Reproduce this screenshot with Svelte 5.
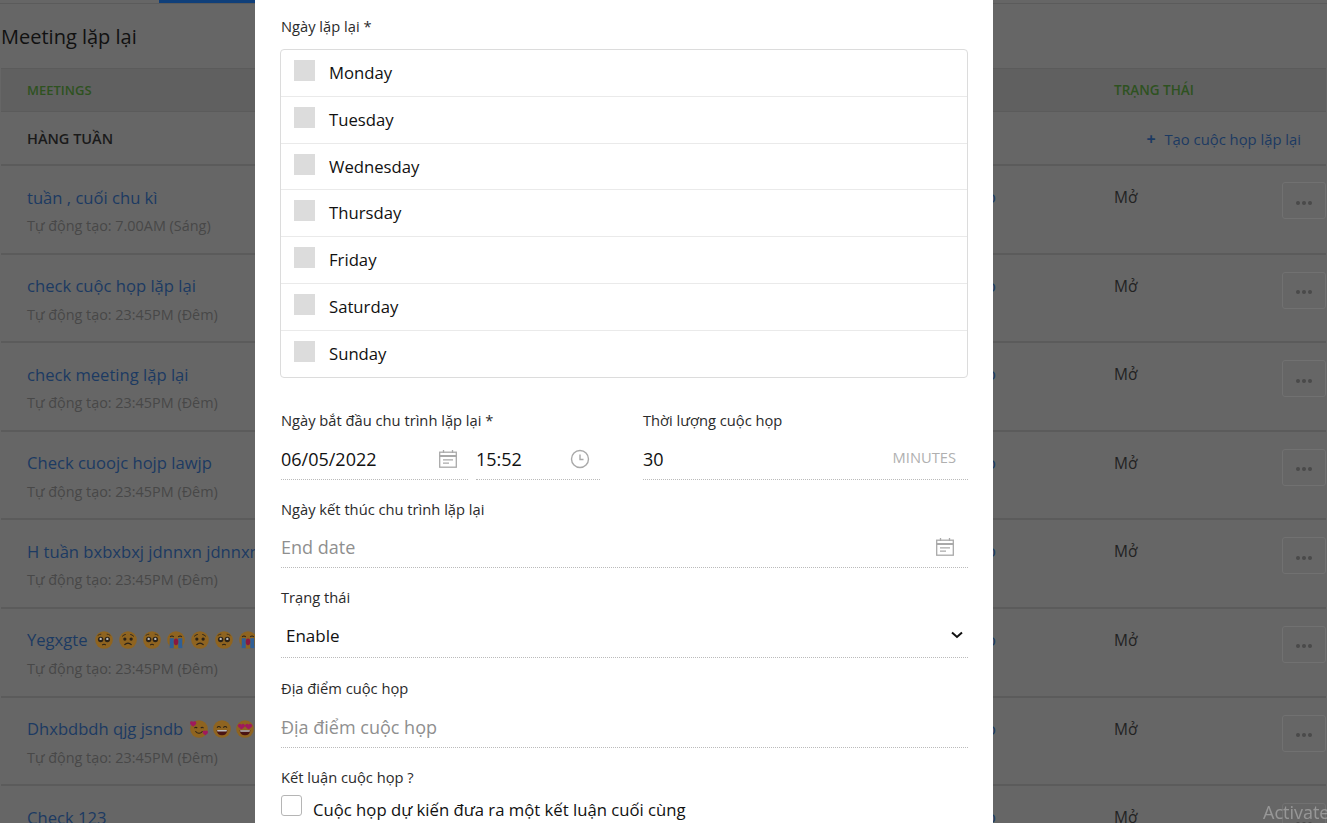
<script>
  const days = ["Monday", "Tuesday", "Wednesday", "Thursday", "Friday", "Saturday", "Sunday"];

  const meetings = [
    { title: "tuần , cuối chu kì", sub: "Tự động tạo: 7.00AM (Sáng)" },
    { title: "check cuộc họp lặp lại", sub: "Tự động tạo: 23:45PM (Đêm)" },
    { title: "check meeting lặp lại", sub: "Tự động tạo: 23:45PM (Đêm)" },
    { title: "Check cuoojc hojp lawjp", sub: "Tự động tạo: 23:45PM (Đêm)" },
    { title: "H tuần bxbxbxj jdnnxn jdnnxn jdnnxn", sub: "Tự động tạo: 23:45PM (Đêm)" },
    { title: "Yegxgte", sub: "Tự động tạo: 23:45PM (Đêm)", emoji: ["plead", "sad", "plead", "cry", "sad", "plead", "cry"] },
    { title: "Dhxbdbdh qjg jsndb", sub: "Tự động tạo: 23:45PM (Đêm)", emoji: ["hearts", "grin", "love"] },
    { title: "Check 123", sub: "Tự động tạo: 23:45PM (Đêm)" }
  ];
</script>

{#snippet face(kind)}
  <svg class="emoji" viewBox="0 0 20 20">
    <circle cx="10" cy="10" r="9.800" fill="#8f6420" />
    {#if kind === "plead"}
      <circle cx="6.300" cy="9.500" r="3" fill="#2a2218" />
      <circle cx="13.700" cy="9.500" r="3" fill="#2a2218" />
      <circle cx="6.300" cy="8.800" r="1.300" fill="#bbb" />
      <circle cx="13.700" cy="8.800" r="1.300" fill="#bbb" />
      <path d="M3 5q2-1.500 4-1.500M17 5q-2-1.500-4-1.500" fill="none" stroke="#3a2c18" stroke-width="1" />
      <path d="M8 15.500q2-1.400 4 0" fill="none" stroke="#2a2218" stroke-width="1.200" />
    {:else if kind === "sad"}
      <circle cx="6.500" cy="9" r="1.800" fill="#2a2218" />
      <circle cx="13.500" cy="9" r="1.800" fill="#2a2218" />
      <path d="M3.500 6q2-2 4-2.200M16.500 6q-2-2-4-2.200" fill="none" stroke="#2a2218" stroke-width="1" />
      <path d="M6 15.500q4-4 8 0" fill="none" stroke="#2a2218" stroke-width="1.300" />
    {:else if kind === "cry"}
      <rect x="3" y="8" width="4.500" height="11" fill="#2f5f96" />
      <rect x="12.500" y="8" width="4.500" height="11" fill="#2f5f96" />
      <path d="M3.500 6.500q2-2 4 0M12.500 6.500q2-2 4 0" fill="none" stroke="#2a2218" stroke-width="1.200" />
      <ellipse cx="10" cy="12" rx="2.500" ry="3.800" fill="#8a1840" />
    {:else if kind === "hearts"}
      <path d="M5 9q1.500-2 3 0M12 9q1.500-2 3 0" fill="none" stroke="#2a2218" stroke-width="1.200" />
      <path d="M6 12.500q4 4.500 8 0" fill="none" stroke="#2a2218" stroke-width="1.200" />
      <path d="M0 3.500a2 2 0 0 1 3.500-1.500a2 2 0 0 1 3.500 1.500q0 1.500-3.500 4q-3.500-2.500-3.500-4z" fill="#a01a5c" />
      <path d="M14 13.500a1.800 1.800 0 0 1 3-1.300a1.800 1.800 0 0 1 3 1.300q0 1.500-3 3.500q-3-2-3-3.500z" fill="#a01a5c" />
    {:else if kind === "grin"}
      <path d="M4.500 8.500q2-2.500 4 0M11.500 8.500q2-2.500 4 0" fill="none" stroke="#2a2218" stroke-width="1.300" />
      <path d="M4 11h12q-.5 6-6 6t-6-6z" fill="#4a1414" />
      <path d="M4.500 11h11l-.4 1.800h-10.200z" fill="#bbb" />
    {:else}
      <path d="M2 6.500a2.200 2.200 0 0 1 4-1.300a2.200 2.200 0 0 1 4 1.300q0 1.500-4 4q-4-2.500-4-4z" fill="#a01a5c" />
      <path d="M10 6.500a2.200 2.200 0 0 1 4-1.300a2.200 2.200 0 0 1 4 1.300q0 1.500-4 4q-4-2.500-4-4z" fill="#a01a5c" />
      <path d="M4 11.500h12q-.5 5.500-6 5.500t-6-5.500z" fill="#4a1414" />
      <path d="M4.500 11.500h11l-.4 1.500h-10.200z" fill="#bbb" />
    {/if}
  </svg>
{/snippet}

{#snippet calendar()}
  <svg class="field-icon" viewBox="0 0 20 20" fill="none" stroke="#a9a9a9" stroke-width="1.300">
    <rect x="1.700" y="3.200" width="16.600" height="15" />
    <path d="M1.700 7h16.600" stroke-width="2" />
    <path d="M5.500 1v3M14.500 1v3" />
    <path d="M5 10.800h10M5 14.200h6" />
  </svg>
{/snippet}

<div class="page">
  <div class="topbar"><span class="active-tab"></span></div>
  <h1>Meeting lặp lại</h1>

  <section class="table">
    <div class="row head">
      <span>MEETINGS</span>
      <span class="head-status">TRẠNG THÁI</span>
    </div>
    <div class="row group">
      <span>HÀNG TUẦN</span>
      <a class="create" href="#top"><b>+</b> Tạo cuộc họp lặp lại</a>
    </div>
    {#each meetings as m, i}
      <div class="row meeting">
        <div class="info">
          <div class="title">
            {m.title}
            {#if m.emoji}
              <span class="emojis" class:tight={m.emoji.length === 3}>
                {#each m.emoji as e}{@render face(e)}{/each}
              </span>
            {/if}
          </div>
          <div class="sub">{m.sub}</div>
        </div>
        <a class="host" href="#top">Demo</a>
        <div class="status">Mở</div>
        <button class="more" class:top-row={i === 0} aria-label="more"><i></i><i></i><i></i></button>
      </div>
    {/each}
  </section>
</div>

<div class="modal">
  <label class="lbl first" for="days">Ngày lặp lại *</label>
  <ul class="days" id="days">
    {#each days as d}
      <li><span class="tick"></span>{d}</li>
    {/each}
  </ul>

  <div class="split">
    <div>
      <div class="lbl">Ngày bắt đầu chu trình lặp lại *</div>
      <div class="date-time">
        <div class="field">
          <input value="06/05/2022" />
          {@render calendar()}
        </div>
        <div class="field">
          <input value="15:52" />
          <svg class="field-icon" viewBox="0 0 20 20" fill="none" stroke="#a9a9a9" stroke-width="1.400">
            <circle cx="10" cy="10" r="8.500" />
            <path d="M10 5.500v5h3.500" />
          </svg>
        </div>
      </div>
    </div>
    <div>
      <div class="lbl">Thời lượng cuộc họp</div>
      <div class="field">
        <input value="30" />
        <span class="unit">MINUTES</span>
      </div>
    </div>
  </div>

  <div class="lbl later">Ngày kết thúc chu trình lặp lại</div>
  <div class="field end-date">
    <input placeholder="End date" />
    {@render calendar()}
  </div>

  <div class="lbl later">Trạng thái</div>
  <div class="field select">
    <span>Enable</span>
    <svg class="chevron" viewBox="0 0 12 8" fill="none" stroke="#111" stroke-width="2">
      <path d="M1 1.500l5 4.500 5-4.500" />
    </svg>
  </div>

  <div class="lbl wide">Địa điểm cuộc họp</div>
  <div class="field">
    <input placeholder="Địa điểm cuộc họp" />
  </div>

  <div class="lbl later">Kết luận cuộc họp ?</div>
  <div class="check">
    <span class="box"></span>
    <span class="check-text">Cuộc họp dự kiến đưa ra một kết luận cuối cùng</span>
  </div>
</div>

<div class="watermark">Activate Windows</div>

<style>
  :global(body) {
    margin: 0;
    background: #666;
    overflow: hidden;
    font-family: "Open Sans", sans-serif;
  }

  .page {
    height: 823px;
    overflow: hidden;
    color: #222;
    background: #666;
  }

  .topbar {
    height: 2px;
    padding-bottom: 1px;
    border-bottom: 1px solid #5b5b5b;
    box-sizing: content-box;
  }

  .active-tab {
    display: block;
    width: 96px;
    height: 3px;
    margin-left: 159px;
    background: #0f3f7a;
  }

  h1 {
    margin: 0;
    padding: 19px 1px 18px;
    font-size: 20px;
    line-height: 27px;
    font-weight: 500;
    color: #111;
  }

  .table {
    margin: 0 1px;
  }

  .row {
    display: grid;
    grid-template-columns: 1087px 1fr;
    padding-left: 26px;
    box-sizing: border-box;
    border-bottom: 1px solid #5b5b5b;
  }

  .head {
    height: 44px;
    align-items: center;
    background: #606060;
    border-top: 1px solid #5b5b5b;
    font-size: 13px;
    font-weight: 600;
    color: #2e5220;
  }

  .head-status {
    font-size: 13.500px;
  }

  .group {
    height: 54px;
    padding-top: 1px;
    align-items: center;
    font-size: 14.500px;
    font-weight: 600;
    color: #1a1a1a;
    border-bottom-width: 2px;
  }

  .create {
    justify-self: end;
    margin-right: 25px;
    font-size: 14.800px;
    font-weight: 500;
    color: #1c3a62;
    text-decoration: none;
  }

  .create b {
    margin-right: 5px;
    font-size: 16px;
    font-weight: 700;
  }

  .meeting {
    position: relative;
    height: 88.600px;
    padding-top: 19px;
    grid-template-columns: 912px 175px 1fr;
    align-items: start;
    border-bottom-width: 2px;
  }

  .title {
    display: flex;
    align-items: center;
    gap: 7px;
    height: 24px;
    font-size: 16.600px;
    color: #1c3a62;
    white-space: nowrap;
    overflow: hidden;
    max-width: 560px;
  }

  .emojis {
    display: flex;
    gap: 6px;
  }

  .tight {
    gap: 5px;
  }

  .emoji {
    width: 18px;
    height: 18px;
    flex: none;
  }

  .sub {
    margin-top: 7px;
    font-size: 14.400px;
    line-height: 19px;
    color: #484848;
  }

  .host {
    font-size: 16.600px;
    line-height: 24px;
    color: #1c3a62;
    text-decoration: none;
    text-align: right;
    margin-right: 118px;
    margin-left: -60px;
  }

  .status {
    font-size: 15.500px;
    line-height: 24px;
    color: #222;
  }

  .more {
    position: absolute;
    top: 17px;
    right: 0;
    display: flex;
    align-items: center;
    justify-content: center;
    gap: 2px;
    width: 44px;
    height: 37px;
    padding: 4px 0 0;
    background: #666;
    border: 1px solid #717171;
    border-radius: 3px;
  }

  .top-row {
    top: 16px;
  }

  .more i {
    width: 4px;
    height: 4px;
    border-radius: 50%;
    background: #4a4a4a;
  }

  .modal {
    position: fixed;
    top: 0;
    left: 255px;
    width: 738px;
    height: 823px;
    padding: 0 25px 0 26px;
    box-sizing: border-box;
    overflow: hidden;
    background: #fff;
    font-size: 16px;
    color: #111;
  }

  .lbl {
    display: block;
    height: 20px;
    margin-top: 19px;
    font-size: 14.700px;
    font-weight: 500;
    line-height: 18px;
    color: #2b2b2b;
  }

  .first {
    margin-top: 17px;
  }

  .later {
    margin-top: 20px;
  }

  .wide {
    margin-top: 21px;
  }

  .days {
    margin: 12px 0 0 -1px;
    padding: 0;
    list-style: none;
    border: 1px solid #dcdcdc;
    border-radius: 4px;
  }

  .days li {
    display: flex;
    height: 46.750px;
    box-sizing: border-box;
    padding: 9px 0 0 13px;
    line-height: 27px;
    font-size: 16.700px;
    color: #111;
    border-bottom: 1px solid #eaeaea;
  }

  .days li:last-child {
    border-bottom: 0;
    height: 46px;
  }

  .tick {
    width: 21px;
    height: 21px;
    margin: 1px 14px 0 0;
    background: #dcdcdc;
  }

  .split {
    display: grid;
    grid-template-columns: 319px 325px;
    gap: 43px;
    margin-top: 33px;
  }

  .split .lbl {
    margin-top: 0;
  }

  .date-time {
    display: grid;
    grid-template-columns: 187px 124px;
    gap: 8px;
  }

  .field {
    display: flex;
    align-items: center;
    height: 49px;
    padding-top: 9px;
    box-sizing: border-box;
    border-bottom: 1px dotted #bbb;
  }

  .end-date {
    height: 48px;
    padding-top: 7px;
  }

  .field input {
    flex: 1;
    min-width: 0;
    padding: 0;
    border: 0;
    outline: 0;
    background: none;
    font: inherit;
    font-size: 18px;
    color: #111;
  }

  .field input::placeholder {
    color: #8f8f8f;
    opacity: 1;
  }

  .field-icon {
    flex: none;
    width: 20px;
    height: 20px;
    margin-right: 10px;
  }

  .end-date .field-icon {
    margin-right: 13px;
  }

  .unit {
    margin-right: 12px;
    margin-top: -4px;
    font-size: 14.700px;
    color: #b0b0b0;
  }

  .select {
    height: 50px;
    justify-content: space-between;
    padding: 6px 5px 0;
    font-size: 17px;
  }

  .chevron {
    width: 12px;
    height: 8px;
  }

  .check {
    display: flex;
    align-items: flex-start;
    gap: 11px;
    margin-top: 7px;
  }

  .check-text {
    padding-top: 4px;
    font-size: 16.700px;
    line-height: 22px;
  }

  .box {
    flex: none;
    width: 21px;
    height: 21px;
    box-sizing: border-box;
    border: 1px solid #b5b5b5;
    border-radius: 3px;
  }

  .watermark {
    position: fixed;
    top: 800px;
    left: 1263px;
    font-size: 18px;
    white-space: nowrap;
    color: rgba(255, 255, 255, 0.32);
  }
</style>
